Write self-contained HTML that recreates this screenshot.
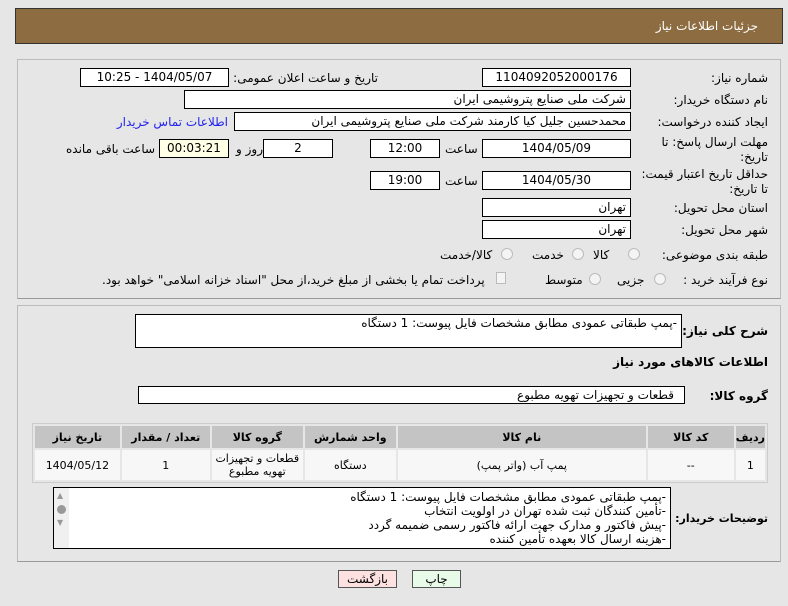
<!DOCTYPE html>
<html><head><meta charset="utf-8">
<style>
*{box-sizing:border-box;margin:0;padding:0}
body{width:788px;height:606px;background:#e6e6e6;font-family:"DejaVu Sans","Liberation Sans",sans-serif;font-size:12px;color:#000;position:relative;overflow:hidden;direction:rtl}
.a{position:absolute;white-space:nowrap}
.in{position:absolute;background:#fff;border:1px solid #000;height:19px;line-height:17px;font-size:12px;padding:0 4px}
.c{text-align:center}
.lbl{position:absolute;white-space:nowrap;font-size:12px}
.rad{position:absolute;width:12px;height:12px;border-radius:50%;border:1px solid #bbb;background:#f4f4f4}
table{position:absolute;left:32px;top:423px;width:736px;border-collapse:separate;border-spacing:2px;background:#e6e6e6;border:1px solid #ccc}
th{background:#c4c4c4;font-weight:bold;height:22px;font-size:11px}
td{background:#f7f7f7;text-align:center;height:30px;font-size:11px}
</style></head><body>
<div class="a" style="left:15px;top:8px;width:768px;height:36px;background:#8c6c40;border:1px solid #333"></div>
<div class="a" style="right:30px;top:19px;color:#fff;font-size:12px">جزئیات اطلاعات نیاز</div>

<div class="a" style="left:17px;top:59px;width:764px;height:240px;border:1px solid #bbb;border-bottom-color:#999"></div>
<div class="a" style="left:17px;top:305px;width:764px;height:257px;border:1px solid #bbb;border-bottom-color:#999"></div>

<div class="lbl" style="right:20px;top:71px">شماره نیاز:</div>
<div class="in c" style="left:482px;top:68px;width:149px">1104092052000176</div>
<div class="lbl" style="right:410px;top:71px">تاریخ و ساعت اعلان عمومی:</div>
<div class="in c" style="left:80px;top:68px;width:149px">1404/05/07 - 10:25</div>

<div class="lbl" style="right:20px;top:93px">نام دستگاه خریدار:</div>
<div class="in" style="left:184px;top:90px;width:447px">شرکت ملی صنایع پتروشیمی ایران</div>

<div class="lbl" style="right:20px;top:115px">ایجاد کننده درخواست:</div>
<div class="in" style="left:234px;top:112px;width:397px">محمدحسین جلیل کیا کارمند شرکت ملی صنایع پتروشیمی ایران</div>
<div class="lbl" style="right:560px;top:115px;color:#2222ee">اطلاعات تماس خریدار</div>

<div class="lbl" style="right:20px;top:135px;line-height:15px">مهلت ارسال پاسخ: تا<br>تاریخ:</div>
<div class="in c" style="left:482px;top:139px;width:149px">1404/05/09</div>
<div class="lbl" style="left:445px;top:142px">ساعت</div>
<div class="in c" style="left:370px;top:139px;width:70px">12:00</div>
<div class="in c" style="left:263px;top:139px;width:70px">2</div>
<div class="lbl" style="left:236px;top:142px">روز و</div>
<div class="in c" style="left:159px;top:139px;width:70px;background:#ffffe6">00:03:21</div>
<div class="lbl" style="left:66px;top:142px">ساعت باقی مانده</div>

<div class="lbl" style="right:20px;top:167px;line-height:15px">حداقل تاریخ اعتبار قیمت:<br>تا تاریخ:</div>
<div class="in c" style="left:482px;top:171px;width:149px">1404/05/30</div>
<div class="lbl" style="left:445px;top:174px">ساعت</div>
<div class="in c" style="left:370px;top:171px;width:70px">19:00</div>

<div class="lbl" style="right:20px;top:201px">استان محل تحویل:</div>
<div class="in" style="left:482px;top:198px;width:149px">تهران</div>
<div class="lbl" style="right:20px;top:223px">شهر محل تحویل:</div>
<div class="in" style="left:482px;top:220px;width:149px">تهران</div>

<div class="lbl" style="right:20px;top:248px">طبقه بندی موضوعی:</div>
<div class="rad" style="left:628px;top:248px"></div><div class="lbl" style="left:593px;top:248px">کالا</div>
<div class="rad" style="left:572px;top:248px"></div><div class="lbl" style="left:532px;top:248px">خدمت</div>
<div class="rad" style="left:501px;top:248px"></div><div class="lbl" style="left:440px;top:248px">کالا/خدمت</div>

<div class="lbl" style="right:20px;top:273px">نوع فرآیند خرید :</div>
<div class="rad" style="left:654px;top:273px"></div><div class="lbl" style="left:617px;top:273px">جزیی</div>
<div class="rad" style="left:589px;top:273px"></div><div class="lbl" style="left:545px;top:273px">متوسط</div>
<div class="a" style="left:496px;top:272px;width:10px;height:12px;border:1px solid #bbb;background:#f4f4f4"></div>
<div class="lbl" style="left:102px;top:273px">پرداخت تمام یا بخشی از مبلغ خرید،از محل "اسناد خزانه اسلامی" خواهد بود.</div>

<div class="lbl" style="right:20px;top:324px;font-weight:bold">شرح کلی نیاز:</div>
<div class="in" style="left:135px;top:314px;width:547px;height:34px">-پمپ طبقاتی عمودی مطابق مشخصات فایل پیوست: 1 دستگاه</div>
<div class="lbl" style="right:20px;top:355px;font-weight:bold">اطلاعات کالاهای مورد نیاز</div>
<div class="lbl" style="right:20px;top:389px;font-weight:bold">گروه کالا:</div>
<div class="in" style="left:138px;top:386px;width:547px;height:18px;padding-right:10px">قطعات و تجهیزات تهویه مطبوع</div>

<table>
<tr><th style="width:27px">ردیف</th><th style="width:86px">کد کالا</th><th style="width:248px">نام کالا</th><th style="width:91px">واحد شمارش</th><th style="width:91px">گروه کالا</th><th style="width:88px">تعداد / مقدار</th><th>تاریخ نیاز</th></tr>
<tr><td>1</td><td>--</td><td>پمپ آب (واتر پمپ)</td><td>دستگاه</td><td style="line-height:13px">قطعات و تجهیزات<br>تهویه مطبوع</td><td>1</td><td>1404/05/12</td></tr>
</table>

<div class="lbl" style="right:20px;top:512px;font-weight:bold;font-size:11px">توضیحات خریدار:</div>
<div class="in" style="left:53px;top:487px;width:618px;height:62px;line-height:14px;white-space:normal;padding-top:2px">-پمپ طبقاتی عمودی مطابق مشخصات فایل پیوست: 1 دستگاه<br>-تأمین کنندگان ثبت شده تهران در اولویت انتخاب<br>-پیش فاکتور و مدارک جهت ارائه فاکتور رسمی ضمیمه گردد<br>-هزینه ارسال کالا بعهده تأمین کننده</div>
<div class="a" style="left:54px;top:488px;width:15px;height:60px;background:#f0f0f0"></div>
<div class="a" style="left:57px;top:491px;color:#999;font-size:8px">▲</div>
<div class="a" style="left:57px;top:505px;width:9px;height:9px;border-radius:50%;background:#999"></div>
<div class="a" style="left:57px;top:518px;color:#999;font-size:8px">▼</div>

<div class="a c" style="left:338px;top:570px;width:59px;height:18px;background:#fde0e0;border:1px solid #555;line-height:16px">بازگشت</div>
<div class="a c" style="left:412px;top:570px;width:49px;height:18px;background:#e8fbe8;border:1px solid #555;line-height:16px">چاپ</div>
</body></html>
